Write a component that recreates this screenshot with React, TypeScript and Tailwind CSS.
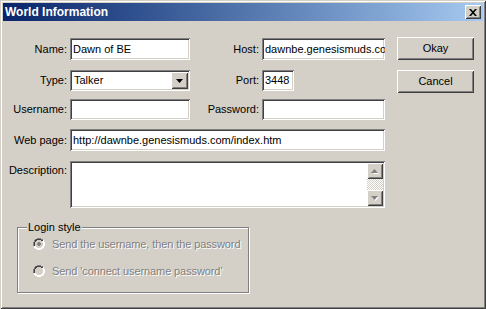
import React from 'react'

const sunken =
  'bg-white shadow-[inset_1px_1px_0_#808080,inset_-1px_-1px_0_#ffffff,inset_2px_2px_0_#404040,inset_-2px_-2px_0_#d4d0c8]'
const raised =
  'bg-[#d4d0c8] shadow-[inset_1px_1px_0_#ffffff,inset_-1px_-1px_0_#404040,inset_2px_2px_0_#d4d0c8,inset_-2px_-2px_0_#808080]'

function Label({ children, w }: { children: React.ReactNode; w: string }) {
  return <div className={`${w} text-right whitespace-nowrap`}>{children}</div>
}

function Field({ value, w, h = 'h-[21px]' }: { value?: string; w: string; h?: string }) {
  return (
    <div className={`${sunken} ${w} ${h} flex items-center pl-[3px] pr-[2px] overflow-hidden whitespace-nowrap`}>
      {value}
    </div>
  )
}

function Radio({ checked, label }: { checked?: boolean; label: string }) {
  return (
    <div className="flex items-center gap-[7px] leading-[16px]">
      <svg width="12" height="12" viewBox="0 0 12 12">
        <path d="M4 0h4v1h2v1h1v2h1v4h-1v2h-1v1h-2v1h-4v-1h-2v-1h-1v-2h-1v-4h1v-2h1v-1h2z" fill="#ffffff" />
        <path d="M4 0h4v1h2v1h-2v-1h-4v1h-2v2h-1v4h-1v-4h1v-2h1v-1h2z" fill="#808080" />
        <path d="M4 1h4v1h2v1h-2v-1h-4v1h-1v1h-1v4h-1v-4h1v-2h1v-1h2z" fill="#404040" />
        <path d="M4 2h4v1h1v1h1v4h-1v1h-1v1h-4v-1h-1v-1h-1v-4h1v-1h1z" fill="#d4d0c8" />
        {checked && <path d="M5 4h2v1h1v2h-1v1h-2v-1h-1v-2h1z" fill="#808080" />}
      </svg>
      <span className="text-[#808080] tracking-[-0.1px] [text-shadow:1px_1px_0_#ffffff]">{label}</span>
    </div>
  )
}

export default function App() {
  return (
    <div
      className="w-[486px] h-[309px] bg-[#d4d0c8] p-[3px] text-[11px] text-black shadow-[inset_1px_1px_0_#d4d0c8,inset_-1px_-1px_0_#404040,inset_2px_2px_0_#ffffff,inset_-2px_-2px_0_#808080]"
      style={{ fontFamily: '"Liberation Sans", Arial, sans-serif' }}
    >
      {/* Title bar */}
      <div className="h-[18px] flex items-center justify-between pl-[2px] pr-[2px] bg-linear-to-r from-[#0a246a] to-[#a6caf0]">
        <span className="text-white font-bold text-[12px] leading-none">World Information</span>
        <div className={`${raised} w-[16px] h-[14px] flex items-center justify-center`}>
          <svg width="8" height="7" viewBox="0 0 8 7">
            <path d="M0 0h2l2 2.3 2-2.3h2l-3 3.5 3 3.5h-2l-2-2.3-2 2.3h-2l3-3.5z" fill="#000" />
          </svg>
        </div>
      </div>

      <div className="flex pl-[4px] pt-[17px]">
        {/* Form */}
        <div className="flex flex-col">
          <div className="flex items-center gap-[3px]">
            <Label w="w-[60px]">Name:</Label>
            <Field value="Dawn of BE" w="w-[120px]" h="h-[22px]" />
            <Label w="w-[66px]">Host:</Label>
            <Field value="dawnbe.genesismuds.com" w="w-[123px]" h="h-[22px]" />
          </div>

          <div className="flex items-center gap-[3px] mt-[10px]">
            <Label w="w-[60px]">Type:</Label>
            <div className={`${sunken} w-[120px] h-[21px] flex items-center justify-between pl-[4px] pr-[2px]`}>
              <span>Talker</span>
              <div className={`${raised} w-[17px] h-[17px] flex items-center justify-center`}>
                <svg width="7" height="4" viewBox="0 0 7 4">
                  <path d="M0 0h7l-3.5 4z" fill="#000" />
                </svg>
              </div>
            </div>
            <Label w="w-[66px]">Port:</Label>
            <Field value="3448" w="w-[32px]" />
          </div>

          <div className="flex items-center gap-[3px] mt-[8px]">
            <Label w="w-[60px]">Username:</Label>
            <Field w="w-[120px]" />
            <Label w="w-[66px]">Password:</Label>
            <Field w="w-[123px]" />
          </div>

          <div className="flex items-center gap-[3px] mt-[9px]">
            <Label w="w-[60px]">Web page:</Label>
            <Field value="http://dawnbe.genesismuds.com/index.htm" w="w-[315px]" h="h-[22px]" />
          </div>

          <div className="flex items-start gap-[3px] mt-[10px]">
            <Label w="w-[60px]">
              <div className="pt-[1px]">Description:</div>
            </Label>
            <div className={`${sunken} w-[315px] h-[47px] flex justify-end p-[2px]`}>
              <div className="w-[16px] h-full flex flex-col">
                <div className={`${raised} w-[16px] h-[16px] flex items-center justify-center`}>
                  <svg width="8" height="5" viewBox="0 0 8 5">
                    <path d="M4 1l3 3h-6z" fill="#ffffff" transform="translate(1 1)" />
                    <path d="M3.5 0l3.5 4h-7z" fill="#808080" />
                  </svg>
                </div>
                <div className="flex-1 bg-[repeating-conic-gradient(#ffffff_0_25%,#d4d0c8_0_50%)] bg-[length:2px_2px]" />
                <div className={`${raised} w-[16px] h-[16px] flex items-center justify-center`}>
                  <svg width="8" height="5" viewBox="0 0 8 5">
                    <path d="M1 1h7l-3.5 4z" fill="#ffffff" />
                    <path d="M0 0h7l-3.5 4z" fill="#808080" />
                  </svg>
                </div>
              </div>
            </div>
          </div>

          {/* Login style group */}
          <div className="ml-[10px] mt-[19px] w-[232px] h-[66px] border border-[#808080] shadow-[inset_1px_1px_0_#ffffff,1px_1px_0_#ffffff] flex flex-col items-start pl-[15px]">
            <span className="-mt-[9px] -ml-[6px] px-[1px] bg-[#d4d0c8] leading-[16px]">Login style</span>
            <div className="flex flex-col gap-[11px] mt-[1px]">
              <Radio checked label="Send the username, then the password" />
              <Radio label="Send 'connect username password'" />
            </div>
          </div>
        </div>

        {/* Buttons */}
        <div className="flex flex-col gap-[10px] ml-[12px] -mt-[1px]">
          <div className={`${raised} w-[77px] h-[23px] flex items-center justify-center`}>Okay</div>
          <div className={`${raised} w-[77px] h-[23px] flex items-center justify-center`}>Cancel</div>
        </div>
      </div>
    </div>
  )
}
